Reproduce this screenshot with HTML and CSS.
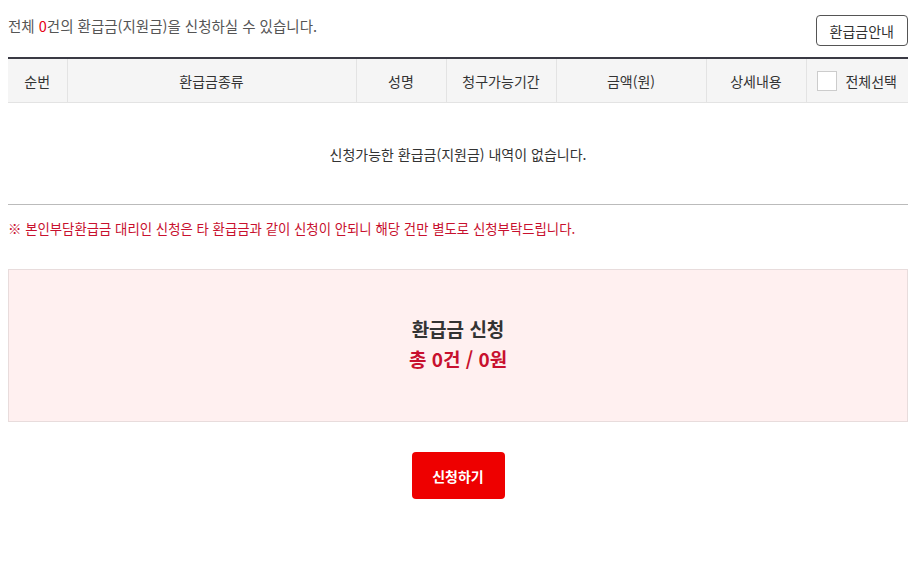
FILE: index.html
```html
<!DOCTYPE html>
<html lang="ko">
<head>
    <meta charset="UTF-8">
    <meta name="viewport" content="width=device-width, initial-scale=1.0">
    <title>환급금 신청</title>
    <link rel="stylesheet" href="styles.css">
</head>
<body>
<div class="wrap">

<div class="top-bar">
    <p class="count-text">전체 <span class="red">0</span>건의 환급금(지원금)을 신청하실 수 있습니다.</p>
    <button type="button" class="btn-guide">환급금안내</button>
</div>

<table class="refund-table">
    <colgroup>
        <col class="c-no">
        <col class="c-kind">
        <col class="c-name">
        <col class="c-period">
        <col class="c-amount">
        <col class="c-detail">
        <col class="c-check">
    </colgroup>
    <thead>
        <tr>
            <th>순번</th>
            <th>환급금종류</th>
            <th>성명</th>
            <th>청구가능기간</th>
            <th>금액(원)</th>
            <th>상세내용</th>
            <th><label class="check-all"><span class="checkbox"></span>전체선택</label></th>
        </tr>
    </thead>
    <tbody>
        <tr>
            <td colspan="7" class="empty">신청가능한 환급금(지원금) 내역이 없습니다.</td>
        </tr>
    </tbody>
</table>

<p class="notice">※ 본인부담환급금 대리인 신청은 타 환급금과 같이 신청이 안되니 해당 건만 별도로 신청부탁드립니다.</p>

<div class="summary">
    <h2>환급금 신청</h2>
    <p class="total">총 0건 / 0원</p>
</div>

<div class="btn-area">
    <button type="submit" class="btn-apply">신청하기</button>
</div>

</div>
</body>
</html>
```

FILE: styles.css
```css
body {
    font-family: "Noto Sans CJK KR", "Noto Sans", sans-serif;
    margin: 8px;
    color: #333;
    background: #fff;
    font-size: 14px;
}

.wrap {
    width: 900px;
}

.top-bar {
    display: flex;
    justify-content: space-between;
    align-items: flex-start;
    height: 49px;
}

.count-text {
    margin: 7px 0 0;
    color: #555;
    font-size: 14.5px;
}

.red {
    color: #e60012;
}

.btn-guide {
    margin-top: 7px;
    height: 31px;
    padding: 0 13px;
    background: #fff;
    border: 1px solid #555;
    border-radius: 4px;
    font-family: inherit;
    font-size: 14px;
    color: #333;
}

.refund-table {
    width: 100%;
    border-collapse: collapse;
    border-top: 2px solid #3a3a44;
    border-bottom: 1px solid #bbb;
}

.c-no { width: 59px; }
.c-kind { width: 289px; }
.c-name { width: 90px; }
.c-period { width: 110px; }
.c-amount { width: 150px; }
.c-detail { width: 100px; }
.c-check { width: 102px; }

.refund-table th {
    height: 43px;
    padding: 0;
    background: #f5f5f5;
    font-weight: normal;
    color: #333;
    border-left: 1px solid #e3e3e3;
    border-bottom: 1px solid #e3e3e3;
}

.refund-table th:first-child {
    border-left: none;
}

.check-all {
    display: flex;
    align-items: center;
    justify-content: center;
    gap: 8px;
}

.checkbox {
    display: inline-block;
    width: 18px;
    height: 18px;
    background: #fff;
    border: 1px solid #ccc;
}

.empty {
    height: 99px;
    text-align: center;
    color: #333;
}

.notice {
    margin: 13px 0 0;
    color: #c8102e;
    font-size: 13.4px;
}

.summary {
    margin-top: 31px;
    height: 151px;
    background: #fff0f0;
    border: 1px solid #e8dcdc;
    display: flex;
    flex-direction: column;
    align-items: center;
    justify-content: center;
    padding-bottom: 3px;
    box-sizing: border-box;
    height: 153px;
}

.summary h2 {
    margin: 0;
    font-size: 19px;
    font-weight: bold;
    color: #333;
    line-height: 30px;
}

.summary .total {
    margin: 0;
    font-size: 19px;
    font-weight: bold;
    color: #c8102e;
    line-height: 30px;
}

.btn-area {
    display: flex;
    justify-content: center;
    margin-top: 30px;
}

.btn-apply {
    width: 93px;
    height: 47px;
    background: #ee0000;
    color: #fff;
    border: none;
    border-radius: 4px;
    font-family: inherit;
    font-size: 14px;
    font-weight: bold;
}
```
